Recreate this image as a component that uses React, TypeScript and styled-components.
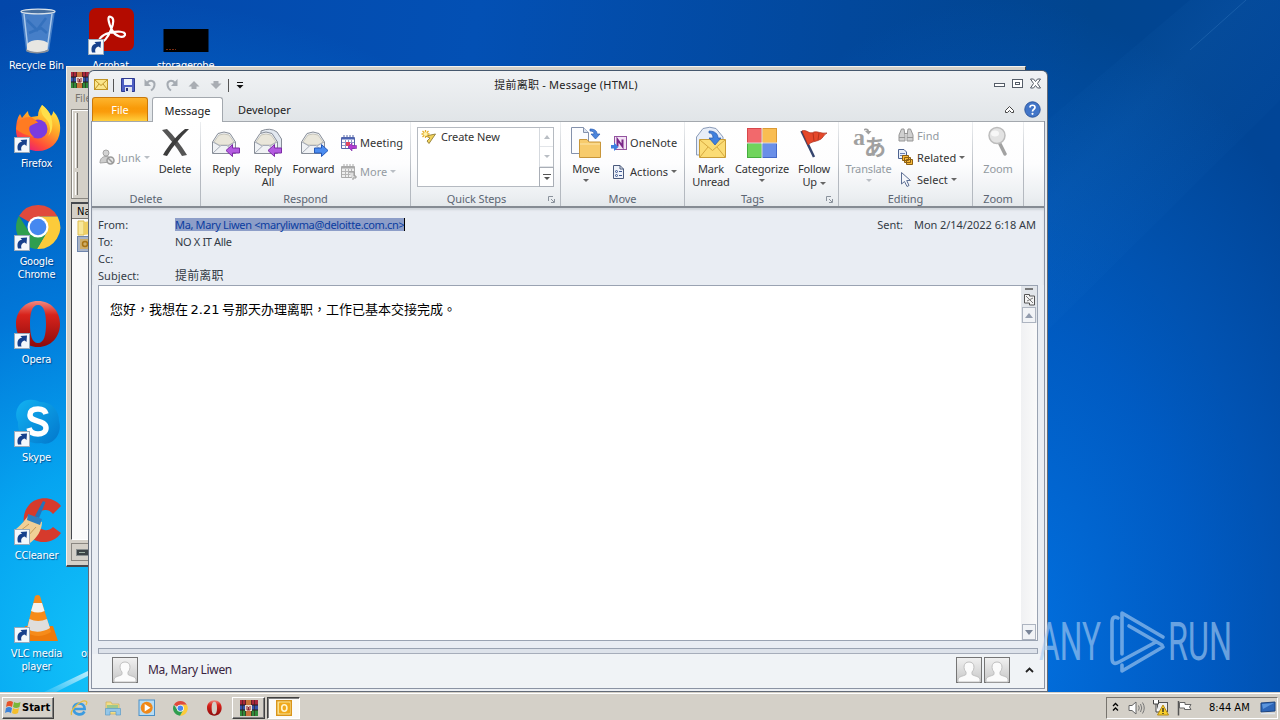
import React from "react";
import styled, { createGlobalStyle, css } from "styled-components";

const UI = `"Noto Sans", "Open Sans", "Noto Sans CJK SC", sans-serif`;
const TAHOMA = `"DejaVu Sans Condensed", "DejaVu Sans", sans-serif`;

const GlobalStyle = createGlobalStyle`
  * {
    box-sizing: border-box;
  }
  body {
    margin: 0;
    overflow: hidden;
    font-family: ${UI};
    font-size: 11px;
    color: #333;
  }
  svg {
    display: block;
    flex: none;
    overflow: visible;
  }
`;

const Desktop = styled.div`
  position: relative;
  display: flex;
  flex-direction: column;
  justify-content: space-between;
  width: 1280px;
  height: 720px;
  overflow: hidden;
  background: radial-gradient(
      ellipse 620px 660px at 130px 660px,
      #14c8fb 0%,
      rgba(6, 172, 246, 0.92) 30%,
      rgba(0, 140, 236, 0.7) 55%,
      rgba(0, 120, 224, 0) 100%
    ),
    radial-gradient(
      ellipse 400px 640px at 1000px 640px,
      #0272e2 0%,
      rgba(0, 98, 210, 0.75) 50%,
      rgba(0, 80, 180, 0) 100%
    ),
    linear-gradient(97deg, #0347aa 0%, #0350b4 35%, #02489c 62%, #01458f 80%, #01459a 100%);
`;

const Rays = styled.svg`
  position: absolute;
  top: 0;
  left: 0;
`;

const IconGrid = styled.div`
  display: grid;
  grid-template-columns: 73px 75px 75px;
  grid-auto-flow: column;
  grid-template-rows: repeat(7, 98px);
  padding-top: 6px;
  height: 692px;
`;

const DesktopItem = styled.div<{ $left?: boolean }>`
  display: flex;
  flex-direction: column;
  align-items: ${(p) => (p.$left ? "flex-start" : "center")};
  padding-left: ${(p) => (p.$left ? "8px" : "0")};
`;

const IconBox = styled.div`
  position: relative;
  width: 48px;
  height: 48px;
`;

const Shortcut = styled.svg`
  position: absolute;
  left: 1px;
  bottom: -1px;
`;

const Caption = styled.span`
  margin-top: 5px;
  font-family: ${TAHOMA};
  font-size: 11px;
  line-height: 13px;
  letter-spacing: -0.2px;
  text-align: center;
  white-space: pre;
  color: #fff;
  text-shadow: 1px 1px 1px rgba(0, 30, 90, 0.6);
`;

/* archiver window in the back */

const BackWindow = styled.div`
  position: absolute;
  left: 66px;
  top: 66px;
  width: 960px;
  height: 501px;
  display: flex;
  flex-direction: column;
  padding: 5px 4px 4px 4px;
  background: #d4d0c8;
  border: 1px solid #f4f2ee;
  border-right-color: #404040;
  border-bottom: 2px solid #45474c;
  font-family: ${TAHOMA};
`;

const BackMenu = styled.div`
  height: 21px;
  padding: 4px 0 0 4px;
  color: #77746e;
  line-height: 14px;
`;

const BackToolbar = styled.div`
  display: flex;
  flex-direction: column;
  gap: 4px;
  height: 90px;
  padding: 3px;
  border: 1px solid #8a8781;
  box-shadow: inset 1px 1px #fff;
`;

const Grip = styled.div<{ $h: number }>`
  width: 3px;
  height: ${(p) => p.$h}px;
  border-left: 1px solid #fff;
  border-right: 1px solid #77746e;
`;

const BackList = styled.div`
  flex: 1;
  margin-top: 3px;
  border: 2px solid #45474c;
  border-left-width: 1px;
  border-right: 0;
  border-bottom: 1px solid #fff;
  background: #fafafa;
`;

const BackColumn = styled.div`
  height: 15px;
  padding-left: 5px;
  border-bottom: 1px solid #77746e;
  background: #d4d0c8;
  color: #000;
  line-height: 15px;
`;

const BackRows = styled.div`
  padding: 1px 0 0 5px;
`;

const BackStatus = styled.div`
  height: 18px;
  margin-top: 3px;
  padding: 5px 0 0 4px;
  border: 1px solid #8a8781;
`;

/* message window */

const MailWindow = styled.div`
  position: absolute;
  left: 88px;
  top: 70px;
  width: 960px;
  height: 622px;
  display: flex;
  flex-direction: column;
  padding: 0 2px 2px;
  border: 1px solid #636b78;
  border-top-color: #46586e;
  border-radius: 6px 6px 0 0;
  background: linear-gradient(#f0f2f4 0, #e1e5e8 50px, #e9edf2 140px, #eceff4 100%);
`;

const TitleBar = styled.div`
  display: grid;
  grid-template-columns: 200px 1fr 204px;
  height: 26px;
  align-items: center;
`;

const QuickAccess = styled.div`
  display: flex;
  align-items: center;
  gap: 8px;
  padding: 2px 0 0 3px;
`;

const Divider = styled.i`
  width: 1px;
  height: 13px;
  margin: 0 -1px 0 -3px;
  background: #555;
`;

const Title = styled.div`
  padding-bottom: 1px;
  text-align: center;
  font-size: 11px;
  letter-spacing: 0.24px;
  color: #222;
`;

const WindowButtons = styled.div`
  display: flex;
  justify-content: flex-end;
  gap: 7px;
  padding: 0 4px 2px 0;
`;

const TabBar = styled.div`
  display: flex;
  align-items: flex-end;
  height: 24px;
  padding-left: 1px;
`;

const Tab = styled.div<{ $kind?: "file" | "active" }>`
  display: flex;
  align-items: center;
  justify-content: center;
  height: 24px;
  letter-spacing: 0;
  color: #222;
  ${(p) =>
    p.$kind === "file" &&
    css`
      width: 56px;
      margin-right: 4px;
      color: #fff;
      border: 1px solid #c9790c;
      border-bottom: 0;
      border-radius: 3px 3px 0 0;
      background: linear-gradient(#fdb52e, #f99a08 45%, #fa9c0c 60%, #ffce3c);
    `}
  ${(p) =>
    p.$kind === "active" &&
    css`
      width: 71px;
      height: 25px;
      margin: 0 15px -1px 0;
      border: 1px solid #a3a8ae;
      border-bottom: 0;
      border-radius: 3px 3px 0 0;
      background: #fff;
      z-index: 1;
    `}
`;

const TabTools = styled.div`
  display: flex;
  align-items: center;
  gap: 9px;
  height: 24px;
  margin-left: auto;
  padding-right: 4px;
`;

const Frame = styled.div`
  flex: 1;
  display: flex;
  flex-direction: column;
  min-height: 0;
  border: 1px solid #8b93a3;
  border-top: 0;
  background: #e9edf3;
`;

const Ribbon = styled.div`
  display: flex;
  height: 87px;
  border-top: 1px solid #a3a8ae;
  border-bottom: 2px solid #858b93;
  background: linear-gradient(#fff 0, #fdfdfe 50%, #eceff2 88%, #e4e8eb 100%);
`;

const Group = styled.div<{ $w: number }>`
  display: flex;
  flex-direction: column;
  flex: none;
  width: ${(p) => p.$w}px;
  border-right: 1px solid;
  border-image: linear-gradient(#eef0f2, #b4b9c0 60%, #b4b9c0) 1;
`;

const GroupBody = styled.div<{ $pad: number }>`
  display: flex;
  height: 69px;
  padding: 5px 0 0 ${(p) => p.$pad}px;
`;

const GroupLabel = styled.div<{ $launcher?: boolean }>`
  display: flex;
  justify-content: center;
  position: relative;
  padding-right: ${(p) => (p.$launcher ? 18 : 0)}px;
  line-height: 15px;
  letter-spacing: -0.1px;
  color: #5c6573;
`;

const Launcher = styled.svg`
  position: absolute;
  right: 5px;
  top: 5px;
`;

const BigButton = styled.div<{ $w: number; $off?: boolean }>`
  display: flex;
  flex-direction: column;
  align-items: center;
  flex: none;
  width: ${(p) => p.$w}px;
  color: ${(p) => (p.$off ? "#939aa1" : "#333")};
`;

const BigLabel = styled.span`
  margin-top: 3px;
  line-height: 13px;
  letter-spacing: -0.15px;
  text-align: center;
  white-space: pre;
`;

const SmallColumn = styled.div<{ $w?: number; $row: number; $top: number; $left?: number }>`
  display: flex;
  flex-direction: column;
  width: ${(p) => (p.$w ? p.$w + "px" : "auto")};
  margin: ${(p) => p.$top}px 0 0 ${(p) => p.$left ?? 0}px;
  > div {
    flex: none;
    height: ${(p) => p.$row}px;
  }
`;

const SmallButton = styled.div<{ $off?: boolean }>`
  display: flex;
  align-items: center;
  gap: 3px;
  letter-spacing: 0.05px;
  white-space: nowrap;
  color: ${(p) => (p.$off ? "#939aa1" : "#333")};
`;

const Arrow = styled.i<{ $off?: boolean; $gap?: number }>`
  width: 0;
  height: 0;
  margin-top: ${(p) => p.$gap ?? 0}px;
  border: 3px solid transparent;
  border-top-color: ${(p) => (p.$off ? "#b9bec4" : "#666")};
  border-bottom: 0;
  display: inline-block;
  vertical-align: middle;
`;

const Gallery = styled.div`
  display: flex;
  width: 137px;
  height: 60px;
  border: 1px solid #b5bac1;
  background: #fff;
`;

const GalleryItem = styled.div`
  display: flex;
  gap: 4px;
  flex: 1;
  padding: 1px 0 0 3px;
  line-height: 16px;
  letter-spacing: -0.1px;
`;

const GalleryScroll = styled.div`
  display: grid;
  grid-template-rows: 19px 20px 19px;
  width: 14px;
  border-left: 1px solid #d5d9de;
`;

const ScrollCell = styled.div<{ $on?: boolean }>`
  display: flex;
  align-items: center;
  justify-content: center;
  border-bottom: 1px solid #e2e5e9;
  ${(p) =>
    p.$on &&
    css`
      margin: 0 -1px -1px -1px;
      border: 1px solid #a9aeb6;
    `}
`;

const Fields = styled.div`
  display: grid;
  grid-template-columns: 77px 1fr auto;
  grid-auto-rows: 17px;
  height: 77px;
  padding: 8px 8px 0 6px;
  line-height: 17px;
  color: #333b45;
  box-shadow: inset 0 2px 2px #cfd4da;
  white-space: pre;
`;

const Cell = styled.div<{ $ls?: number; $size?: number }>`
  font-size: ${(p) => p.$size ?? 11}px;
  letter-spacing: ${(p) => p.$ls ?? 0.05}px;
`;

const SentLabel = styled.span`
  margin-right: 11px;
`;

const Selected = styled.span`
  display: inline-block;
  height: 13px;
  line-height: 13px;
  border-right: 1px solid #000;
  background: #8d9ec8;
  color: #0a3ca0;
`;

const MessageBody = styled.div`
  display: flex;
  height: 356px;
  margin: 0 6px;
  border: 1px solid #9aa3b2;
  background: #fff;
`;

const Message = styled.div`
  flex: 1;
  padding: 15px 0 0 11px;
  font-family: "DejaVu Sans", "Noto Sans CJK TC", sans-serif;
  font-size: 13px;
  line-height: 18px;
  word-spacing: -1.6px;
  color: #000;
`;

const Scrollbar = styled.div`
  display: flex;
  flex-direction: column;
  justify-content: space-between;
  width: 16px;
  background: linear-gradient(90deg, #f0f1f3, #fafafa);
`;

const ScrollTop = styled.div`
  display: flex;
  flex-direction: column;
  align-items: center;
  background: #e1e5ea;
`;

const ScrollButton = styled.div`
  display: flex;
  align-items: center;
  justify-content: center;
  width: 14px;
  height: 16px;
  margin: 0 1px;
  border: 1px solid #adb4c0;
  background: #f1f3f6;
`;

const Splitter = styled.div`
  height: 6px;
  margin: 7px 6px 0;
  border: 1px solid #9aa3b2;
  border-bottom-color: #a6adba;
  background: #dde2ea;
`;

const People = styled.div`
  flex: 1;
  display: flex;
  align-items: center;
  gap: 2px;
  padding: 0 10px 3px 20px;
  background: #f0f3f6;
`;

const PersonName = styled.span`
  flex: 1;
  padding-left: 8px;
  font-size: 12px;
  letter-spacing: -0.35px;
  color: #3a2340;
`;

const Watermark = styled.svg`
  position: absolute;
  left: 1034px;
  top: 606px;
`;

/* taskbar */

const Taskbar = styled.div`
  display: flex;
  align-items: center;
  height: 28px;
  padding: 2px 2px 0 2px;
  border-top: 1px solid #d4d0c8;
  box-shadow: inset 0 1px #fff;
  background: #d4d0c8;
  font-family: ${TAHOMA};
  color: #000;
`;

const raised = css`
  border: 1px solid;
  border-color: #fff #404040 #404040 #fff;
  box-shadow: inset -1px -1px #808080;
`;

const StartButton = styled.div`
  display: flex;
  align-items: center;
  gap: 1px;
  width: 52px;
  height: 22px;
  padding: 0 2px 1px;
  margin-right: 16px;
  font-weight: bold;
  font-size: 11px;
  ${raised}
`;

const Launch = styled.div`
  display: flex;
  width: 34px;
`;

const TaskButtons = styled.div`
  display: flex;
  gap: 2px;
  margin-left: -8px;
`;

const TaskButton = styled.div<{ $active?: boolean }>`
  display: flex;
  align-items: center;
  justify-content: center;
  width: 33px;
  height: 22px;
  ${(p) =>
    p.$active
      ? css`
          border: 1px solid;
          border-color: #404040 #fff #fff #404040;
          box-shadow: inset 1px 1px #808080;
          background: #fbfaf8;
        `
      : raised}
`;

const Tray = styled.div`
  display: flex;
  align-items: center;
  gap: 7px;
  width: 172px;
  height: 22px;
  margin-left: auto;
  padding: 0 1px 0 5px;
  border: 1px solid;
  border-color: #77746e #fff #fff #77746e;
  > svg:first-child {
    margin-right: 2px;
  }
`;

const Clock = styled.span`
  flex: 1;
  padding-left: 9px;
  white-space: nowrap;
`;

/* icons */

const ShortcutArrow = () => (
  <Shortcut width="16" height="16" viewBox="0 0 16 16">
    <rect x=".5" y=".5" width="15" height="15" fill="#f4f8fc" stroke="#9ab" />
    <path d="M4 13.500C2.500 8.500 4.500 5 8 4.800L6.500 3L13 2.500L12.500 9L10.700 7.500C8 8 6.500 10 7.500 13.500Z" fill="#16408c" />
  </Shortcut>
);

const RecycleIcon = () => (
  <svg width="48" height="48" viewBox="0 0 48 48">
    <path d="M8 5L13 45C18 48 31 48 36 45L42 5Z" fill="#7da9dd" fillOpacity=".55" />
    <path d="M11 8L15 44M39 8L34 44" stroke="#d5e8fa" strokeWidth="1.500" opacity=".7" />
    <path d="M14 38C18 33 30 33 35 37L34 44C29 47 19 47 14 44Z" fill="#e7e6e2" />
    <path d="M13 43C18 47 30 47 36 43L35 45.500C29 48 19 48 13.500 45.500Z" fill="#8b8f96" />
    <path d="M14 14L24 24L33 12M16 27L28 22L34 27" stroke="#2766b4" strokeWidth="2.500" fill="none" opacity=".55" />
    <ellipse cx="25" cy="5.500" rx="17" ry="2.300" fill="#476f9f" stroke="#d9e2ea" strokeWidth="1.300" />
  </svg>
);

const AcrobatIcon = () => (
  <svg width="48" height="48" viewBox="0 0 48 48">
    <rect x="2" y="2" width="45" height="43" rx="7" fill="#b30b00" />
    <path
      d="M24 11C20 9 21 16 25 24C28 30 36 33 38 29C39 25 30 25 22 27C14 29 11 34 13 36C16 38 21 31 24 24C27 17 27 12 24 11Z"
      fill="none"
      stroke="#fff"
      strokeWidth="2.200"
    />
  </svg>
);

const StorageIcon = () => (
  <svg width="48" height="48" viewBox="0 0 48 48">
    <rect x="1.500" y="23" width="45" height="23" fill="#000" />
    <path d="M4 43.500H14" stroke="#7a2c10" strokeDasharray="2 1" />
  </svg>
);

const FirefoxIcon = () => (
  <svg width="48" height="48" viewBox="0 0 48 48">
    <defs>
      <linearGradient id="ff" x1=".8" y1="0" x2=".2" y2="1">
        <stop offset="0" stopColor="#fff04a" />
        <stop offset=".4" stopColor="#ffa526" />
        <stop offset=".75" stopColor="#ff4b3a" />
        <stop offset="1" stopColor="#e31587" />
      </linearGradient>
    </defs>
    <path
      d="M29 1C34 5 37 9 38 12C40 10 40 8 40 7C45 12 48 19 47 27C46 39 37 47 25 47C12 47 3 38 3 26C3 20 4 14 7 10L9 14C11 11 13 9 15 7C15 10 16 12 18 13L25 12C25 7 27 4 29 1Z"
      fill="url(#ff)"
    />
    <circle cx="25" cy="25" r="9.500" fill="#7a3be0" />
    <path d="M3 25C5 16 10 13 18 13C21 15 24 17 25 19C21 19 20 21 17 22C15 25 17 30 21 33C12 31 6 28 3 25Z" fill="#ff7b22" />
    <path d="M29 1C27 7 29 11 33 15C38 20 38 28 35 32C41 27 40 16 37 11C35 6 32 3 29 1Z" fill="#ffe04a" />
  </svg>
);

const ChromeIcon = ({ size = 48 }: { size?: number }) => (
  <svg width={size} height={size} viewBox="0 0 48 48">
    <path d="M25 25L6 14A22 22 0 0 1 44.500 14.500H25Z" fill="#e04a3c" />
    <path d="M25 25V14.500H44.500A22 22 0 0 1 24 47L34 30Z" fill="#fccb3a" />
    <path d="M25 25L34 30L24 47A22 22 0 0 1 6 14L16 30Z" fill="#2f9e4f" />
    <circle cx="25" cy="25" r="10.500" fill="#fff" />
    <circle cx="25" cy="25" r="8.300" fill="#4688f0" />
  </svg>
);

const OperaIcon = ({ size = 48 }: { size?: number }) => (
  <svg width={size} height={size} viewBox="0 0 48 48">
    <defs>
      <linearGradient id="op" x1="0" y1="0" x2="0" y2="1">
        <stop offset="0" stopColor="#f08a80" />
        <stop offset=".3" stopColor="#d8231c" />
        <stop offset="1" stopColor="#8c0b0c" />
      </linearGradient>
    </defs>
    <path
      fillRule="evenodd"
      d="M25 1C38 1 47 11 47 24S38 47 25 47S3 37 3 24S12 1 25 1ZM25 5C19 5 17 13 17 24S19 43 25 43S33 35 33 24S31 5 25 5Z"
      fill="url(#op)"
    />
  </svg>
);

const SkypeIcon = () => (
  <svg width="48" height="48" viewBox="0 0 48 48">
    <defs>
      <linearGradient id="sk" x1="0" y1="0" x2="1" y2="1">
        <stop offset="0" stopColor="#12b2f2" />
        <stop offset="1" stopColor="#0277cc" />
      </linearGradient>
    </defs>
    <path d="M15 2C21 1 25 3 27 4C39 4 46 12 46 23C50 36 39 49 28 45C14 47 4 37 5 24C0 14 6 3 15 2Z" fill="url(#sk)" />
    <path
      d="M33 16C32 12 29 11 25 11C20 11 17 13 17 17C17 25 33 21 33 30C33 34 29 36 25 36C20 36 17 34 16 30"
      fill="none"
      stroke="#fff"
      strokeWidth="5.500"
    />
  </svg>
);

const CCleanerIcon = () => (
  <svg width="48" height="48" viewBox="0 0 48 48">
    <path d="M48 10C40 0 24 0 16 9C7 19 10 37 20 43C29 49 42 46 48 37L40 31C35 36 28 35 25 29C21 22 26 13 33 14C37 14 39 17 40 18Z" fill="#d63a2c" />
    <path d="M3 33C9 28 12 24 15 20L29 26C29 34 24 42 17 47L12 40Z" fill="#f0cf96" />
    <path d="M7 35L16 28M14 41L23 31" stroke="#c89b58" />
    <path d="M15 18L29 23L27 29L14 24Z" fill="#2e7fc0" />
    <path d="M22 20L30 5L32.500 6L26 22Z" fill="#2373bb" />
  </svg>
);

const VlcIcon = () => (
  <svg width="48" height="48" viewBox="0 0 48 48">
    <path d="M12 32H40L45 47H12Z" fill="#ed7a0c" />
    <path d="M22 2Q25 0 27 2L38 38Q25 46 13 38Z" fill="#f68b1a" />
    <path d="M20.500 9H29L31.500 17Q25 20 18 17Z" fill="#f4f2ef" />
    <path d="M16.500 25Q25 29 34 25L37 34Q25 41 14 35Z" fill="#dfdedc" />
  </svg>
);

const WinRarIcon = () => (
  <svg width="18" height="16" viewBox="0 0 18 16">
    <path d="M0 0H18V5H0Z" fill="#a8273c" />
    <path d="M0 5H18V10H0Z" fill="#3351a8" />
    <path d="M0 10H18V16H0Z" fill="#2f8a3a" />
    <path d="M0 5H18M0 10H18" stroke="#23181c" />
    <path d="M6 0H11V16H6Z" fill="#c9743a" />
    <path d="M5.500 0V16M11.500 0V16M2.500 0V16M14.500 0V16" stroke="#35201c" opacity=".6" />
    <path d="M5 5H12V11H5Z" fill="#e8dbd0" />
    <path d="M7 6V10H10V6M8.500 7V10" stroke="#8a2233" fill="none" />
  </svg>
);

const OutlookIcon = () => (
  <svg width="16" height="16" viewBox="0 0 16 16">
    <rect x=".7" y=".7" width="14.600" height="14.600" fill="#fbe08a" stroke="#d9941a" strokeWidth="1.400" />
    <rect x="3" y="2.500" width="11" height="11" rx="1" fill="#f0a91c" />
    <ellipse cx="8.300" cy="8" rx="2.600" ry="3.200" fill="none" stroke="#fff4cf" strokeWidth="1.600" />
  </svg>
);

const MessageFileIcon = () => (
  <svg width="16" height="16" viewBox="0 0 16 16">
    <rect x=".5" y=".5" width="15" height="15" fill="#a9b4c6" stroke="#6f86ad" />
    <rect x="3" y="3" width="10" height="10" fill="#cfae6a" />
    <circle cx="8" cy="8" r="2.500" fill="none" stroke="#a97412" strokeWidth="1.500" />
  </svg>
);

const FolderIcon = () => (
  <svg width="16" height="16" viewBox="0 0 16 16">
    <path d="M1 1H7V15H1Z" fill="#f8e79a" stroke="#dcbc4f" />
    <path d="M7 2L14 1V14L7 15Z" fill="#efcf63" />
  </svg>
);

const MailIcon = () => (
  <svg width="14" height="14" viewBox="0 0 14 14">
    <rect x=".5" y="1.500" width="13" height="10" fill="#fae58a" stroke="#c09426" />
    <path d="M1 2L7 7.500L13 2M1 11L5 6M13 11L9 6" stroke="#c09426" fill="none" />
  </svg>
);

const SaveIcon = () => (
  <svg width="14" height="14" viewBox="0 0 14 14">
    <path d="M.5.5H13.500V13.500H.5Z" fill="#4e5fc4" stroke="#2d3a91" />
    <rect x="3" y="1" width="8" height="6" fill="#eef2fa" />
    <rect x="4" y="9" width="7" height="5" fill="#dfe3ef" />
    <rect x="5" y="10" width="2" height="3" fill="#26307c" />
  </svg>
);

const UndoIcon = ({ flip }: { flip?: boolean }) => (
  <svg width="14" height="14" viewBox="0 0 14 14">
    <g transform={flip ? "matrix(-1 0 0 1 14 0)" : undefined}>
      <path d="M4 5C7 1.500 12 2.500 11.500 7C11.300 9.500 9.500 11.500 8 12.500" fill="none" stroke="#a5abb2" strokeWidth="2" />
      <path d="M1.500 1V8H8Z" fill="#a5abb2" />
    </g>
  </svg>
);

const UpIcon = ({ flip }: { flip?: boolean }) => (
  <svg width="14" height="12" viewBox="0 0 14 12">
    <path transform={flip ? "matrix(1 0 0 -1 0 12)" : undefined} d="M7 2L12.500 7.500H9.500V10H4.500V7.500H1.500Z" fill="#a9adb3" />
  </svg>
);

const CustomizeIcon = () => (
  <svg width="8" height="12" viewBox="0 0 8 12">
    <path d="M1 3.500H7" stroke="#111" />
    <path d="M.5 6H7.500L4 9.500Z" fill="#111" />
  </svg>
);

const DeleteIcon = () => (
  <svg width="32" height="32" viewBox="0 0 32 32">
    <path d="M3 3L8 2C15 9 22 18 28 28L23 29C17 19 10 11 3 3Z" fill="#555" />
    <path d="M30 2L26 2C17 9 9 19 4 28L8 29C14 19 21 11 30 2Z" fill="#3d3d3d" />
  </svg>
);

const JunkIcon = () => (
  <svg width="16" height="16" viewBox="0 0 16 16">
    <circle cx="7" cy="4" r="3" fill="#d3d3d3" stroke="#a4a4a4" />
    <path d="M1 14C1 9 4 7.500 7 7.500S12 9 12 13Z" fill="#cdcdcd" stroke="#a4a4a4" />
    <circle cx="11.500" cy="11.500" r="3.500" fill="#e4e4e4" stroke="#9a9a9a" strokeWidth="1.500" />
    <path d="M9 9L14 14" stroke="#9a9a9a" strokeWidth="1.500" />
  </svg>
);

const Envelope = () => (
  <>
    <path d="M2.500 14L8 5.500Q14 2.500 20 5.500L25.500 14V25.500H2.500Z" fill="#f0f2f5" stroke="#878d97" />
    <path d="M4 14L9 7Q14 5 19 7L24 14L19 17H9Z" fill="#e9e6da" stroke="#b8b6ab" strokeWidth=".7" />
    <path d="M3 25L11 17.500H17L25 25M3 14L10 18M25 14L18 18" stroke="#a6acb8" fill="none" />
  </>
);

const ReplyIcon = ({ all }: { all?: boolean }) => (
  <svg width="32" height="32" viewBox="0 0 32 32">
    {all && <path d="M9 4Q18 0 25 5L29.500 12V24H9Z" fill="#e2e8f0" stroke="#878d97" />}
    <g transform="translate(0 1)">
      <Envelope />
    </g>
    <path d="M16 23.500L22.500 17.500V21H29.500V26H22.500V29.500Z" fill="#b35be0" stroke="#7d2ba8" />
  </svg>
);

const ForwardIcon = () => (
  <svg width="32" height="32" viewBox="0 0 32 32">
    <g transform="translate(1 1)">
      <Envelope />
    </g>
    <path d="M30 23.500L23.500 17.500V21H16.500V26H23.500V29.500Z" fill="#4b8cf0" stroke="#2659b8" />
  </svg>
);

const MeetingIcon = ({ off }: { off?: boolean }) => (
  <svg width="16" height="16" viewBox="0 0 16 16">
    <path d="M.5 2.500H13.500V13.500H.5Z" fill={off ? "#eee" : "#fff"} stroke={off ? "#a9a9a9" : "#5566a8"} />
    <path d="M1 3.500H13" stroke={off ? "#aaa" : "#4b63b4"} strokeWidth="2" />
    <path d="M4.500 5V13M7.500 5V13M10.500 5V13M1 7.500H13M1 10.500H13" stroke={off ? "#b5b5b5" : "#8f9cc9"} />
    <path d="M3 0V3M6 0V3M9 0V3M12 0V3" stroke={off ? "#aaa" : "#5566a8"} />
    {off ? (
      <path d="M8 8H13V12H15V14H12V16" fill="#ddd" stroke="#999" />
    ) : (
      <>
        <rect x="5" y="7" width="4" height="4" fill="#e0475f" />
        <path d="M7 12L11 8V10.500H15.500V13.500H11V16Z" fill="#b13bd0" stroke="#7d2ba8" strokeWidth=".6" />
      </>
    )}
  </svg>
);

const CreateIcon = () => (
  <svg width="16" height="16" viewBox="0 0 16 16">
    <path d="M5 7L14.500 5L8 14.500L6 12L9 9Z" fill="#f3d35a" stroke="#9a8742" />
    <path d="M4.500 1V9M.5 5H8.500M1.500 2L7.500 8M7.500 2L1.500 8" stroke="#e5ad2a" strokeWidth="1.300" />
    <circle cx="4.500" cy="5" r="2" fill="#fff2a8" />
  </svg>
);

const MoveIcon = () => (
  <svg width="32" height="32" viewBox="0 0 32 32">
    <path d="M1.500.5H13.500L18.500 5.500V26.500H1.500Z" fill="#fcfdff" stroke="#8492ac" />
    <path d="M13.500.5V5.500H18.500" fill="#dbe3f0" stroke="#8492ac" />
    <path d="M9.500 12.500H17L19 15H30.500V30.500H9.500Z" fill="#f7cb6c" stroke="#c8963b" />
    <path d="M10 17H30" stroke="#fde6ab" />
    <path d="M20 2C25 2 27 4 27 7H30L25.500 12L21 7H24C24 5 23 4 20 4Z" fill="#4d86dc" stroke="#2c5fb3" strokeWidth=".7" />
  </svg>
);

const OneNoteIcon = () => (
  <svg width="16" height="16" viewBox="0 0 16 16">
    <rect x="3.500" y="1.500" width="12" height="13" fill="#f3e2f5" stroke="#93549f" />
    <path d="M6.500 11.500V4.500L11.500 11.500V4.500" fill="none" stroke="#7a2788" strokeWidth="2" />
    <path d="M0 10H3V7.500L7.500 12L3 16V13.500H0Z" fill="#3f7fe0" />
  </svg>
);

const ActionsIcon = () => (
  <svg width="16" height="16" viewBox="0 0 16 16">
    <path d="M2.500 1.500H9L12.500 5V14.500H2.500Z" fill="#eef2f9" stroke="#4a5a7c" />
    <path d="M9 1.500V5H12.500" fill="none" stroke="#4a5a7c" />
    <circle cx="5.500" cy="7.500" r="1" fill="none" stroke="#3a5490" />
    <circle cx="5.500" cy="11.500" r="1" fill="none" stroke="#3a5490" />
    <path d="M8 7.500H11M8 11.500H11" stroke="#3a5490" />
  </svg>
);

const UnreadIcon = () => (
  <svg width="32" height="32" viewBox="0 0 32 32">
    <path d="M1.500 12V10L8 1.500Q15 -1 21 1.500L28 10V28H1.500Z" fill="#e8eef8" stroke="#8a9bb8" />
    <path d="M4.500 12.500H30.500V30.500H4.500Z" fill="#fbdc75" stroke="#c99d38" />
    <path d="M5 13L17.500 23.500L30 13M5 30L13 20M30 30L22 20" fill="none" stroke="#d5a83f" />
    <path d="M14 4C20 4 23 7 23 11H26L20 18L14 11H18C18 8 17 6 14 6Z" fill="#3f80de" stroke="#2456ac" strokeWidth=".7" />
  </svg>
);

const CategorizeIcon = () => (
  <svg width="32" height="32" viewBox="0 0 32 32">
    <rect x="1.500" y="1.500" width="14" height="14" fill="#f2696c" stroke="#d8474a" />
    <rect x="16.500" y="1.500" width="14" height="14" fill="#f9bd52" stroke="#dc9a34" />
    <rect x="1.500" y="16.500" width="14" height="14" fill="#6fd45c" stroke="#45ad3f" />
    <rect x="16.500" y="16.500" width="14" height="14" fill="#6a8fe8" stroke="#4569c9" />
    <path d="M16 1V31M1 16H31" stroke="#f6f8fa" />
  </svg>
);

const FlagIcon = () => (
  <svg width="32" height="32" viewBox="0 0 32 32">
    <path d="M3.500 4L16 30" stroke="#35456e" strokeWidth="2.500" />
    <path d="M4 4C9 2 11 8 16 5C20 4 23 7 29 6C25 8 25 12 21 13C17 15 14 14 10 18Z" fill="#e5482a" stroke="#a92b18" strokeWidth=".7" />
    <path d="M15 6L16 14M21 6L20 13" stroke="#b5321c" />
  </svg>
);

const TranslateIcon = () => (
  <svg width="32" height="32" viewBox="0 0 32 32" fill="#a0a0a0">
    <text x="0" y="18" fontFamily="Liberation Serif, serif" fontWeight="bold" fontSize="24">
      a
    </text>
    <text x="11" y="28" fontFamily="Noto Sans CJK JP, sans-serif" fontWeight="bold" fontSize="22">
      あ
    </text>
    <path d="M11 2C14 1 16 2 16 4H18.500L15.500 7.500L12 4H14C14 3 13 3 11 3.500Z" />
  </svg>
);

const FindIcon = () => (
  <svg width="16" height="16" viewBox="0 0 16 16">
    <path d="M3.500 2H6L7 8V14H1V8ZM10 2H12.500L15 8V14H9V8Z" fill="#d0d0d0" stroke="#969696" />
    <path d="M6 6.500H10M1 10.500H7M9 10.500H15" stroke="#969696" />
  </svg>
);

const RelatedIcon = () => (
  <svg width="16" height="16" viewBox="0 0 16 16">
    <path d="M.5.5H6L8.500 3V9.500H.5Z" fill="#e9eff9" stroke="#4e6390" />
    <path d="M2 4.500H7M2 6.500H7" stroke="#6b82b5" />
    <path d="M4.500 6.500H10.500V11.500H4.500ZM6.500 8.500H12.500V13.500H6.500ZM8.500 10.500H14.500V15.500H8.500Z" fill="#f7b93a" stroke="#8c5f13" />
  </svg>
);

const SelectIcon = () => (
  <svg width="16" height="16" viewBox="0 0 16 16">
    <path d="M3.500 1.500V13L6.500 10.500L9 15.500L11 14.500L8.700 9.500H12.500Z" fill="#f4f6fa" stroke="#5d6f94" />
  </svg>
);

const ZoomIcon = () => (
  <svg width="32" height="32" viewBox="0 0 32 32">
    <path d="M18 17L23 27" stroke="#a2a2a2" strokeWidth="3.500" strokeLinecap="round" />
    <circle cx="15" cy="8.500" r="8" fill="#e3e3e3" stroke="#bcbcbc" strokeWidth="1.500" />
    <ellipse cx="13" cy="6.500" rx="4" ry="3" fill="#f7f7f7" />
  </svg>
);

const LauncherIcon = () => (
  <Launcher width="7" height="7" viewBox="0 0 7 7">
    <path d="M.5 5V.5H5M3 3L6 6M6.500 3V6.500H3" fill="none" stroke="#8a929c" />
  </Launcher>
);

const HelpIcon = () => (
  <svg width="17" height="17" viewBox="0 0 17 17">
    <circle cx="8.500" cy="8.500" r="7.700" fill="#4175c8" stroke="#2c579f" />
    <path d="M6 6.500C6 3.500 11 3.500 11 6.500C11 8.300 8.500 8.300 8.500 10.500" fill="none" stroke="#fff" strokeWidth="1.700" />
    <circle cx="8.500" cy="12.800" r="1.100" fill="#fff" />
  </svg>
);

const Avatar = () => (
  <svg width="26" height="26" viewBox="0 0 26 26">
    <defs>
      <linearGradient id="av" x1="0" y1="0" x2="0" y2="1">
        <stop offset="0" stopColor="#f1f1f1" />
        <stop offset="1" stopColor="#c6c6c6" />
      </linearGradient>
    </defs>
    <rect x=".5" y=".5" width="25" height="25" fill="url(#av)" stroke="#757575" />
    <path
      d="M2 25V22C3 19 7 19.500 10 17.500V15C7 12 7 5 13 5S19 12 16 15V17.500C19 19.500 23 19 24 22V25Z"
      fill="#fbfbfb"
      stroke="#c0c0c0"
    />
  </svg>
);

const IeIcon = () => (
  <svg width="18" height="18" viewBox="0 0 18 18">
    <path d="M14.500 12.500C11.500 17.500 3.500 15.500 3.500 9.500C3.500 3 14.500 2.500 14.700 10H4" fill="none" stroke="#3b9be0" strokeWidth="2.600" />
    <path d="M1.500 16C-.5 11 12-.5 16.500 2.500C17.500 3.500 16.500 5 16 6" fill="none" stroke="#e6bd3f" strokeWidth="1.300" />
  </svg>
);

const ExplorerIcon = () => (
  <svg width="18" height="18" viewBox="0 0 18 18">
    <path d="M2 3H7L8 5H15V15H2Z" fill="#f3dd86" stroke="#cdb05a" strokeWidth=".7" />
    <path d="M3 6H14V10H3Z" fill="#9cc88e" />
    <path d="M1.500 9.500H16.500V16H12V12.500H6V16H1.500Z" fill="#93c6e8" stroke="#5b9cc9" strokeWidth=".7" />
  </svg>
);

const PlayerIcon = () => (
  <svg width="18" height="18" viewBox="0 0 18 18">
    <rect x="1" y="1" width="15.500" height="15.500" fill="#b7dcf4" stroke="#4a90c8" />
    <circle cx="8.700" cy="8.700" r="6" fill="#f08818" />
    <path d="M6.700 5V12.500L12.500 8.700Z" fill="#fff" />
  </svg>
);

const StartLogo = () => (
  <svg width="16" height="16" viewBox="0 0 16 16">
    <path d="M2 3Q5 1 8 3L7 8Q4 6 1 8Z" fill="#e6532a" />
    <path d="M9 3Q12 5 15.500 3L14.500 8Q11 10 8 8Z" fill="#7ab73a" />
    <path d="M1 9Q4 7 7 9L6 14Q3 12 0 14Z" fill="#3c83d9" />
    <path d="M8 9Q11 11 14 9L13 14Q10 16 7 14Z" fill="#f4be2b" />
  </svg>
);

const ChevronsIcon = () => (
  <svg width="7" height="12" viewBox="0 0 7 12">
    <path d="M1 4L3.500 1.500L6 4M1 8.500L3.500 6L6 8.500" fill="none" stroke="#000" strokeWidth="1.300" />
  </svg>
);

const SpeakerIcon = () => (
  <svg width="17" height="16" viewBox="0 0 17 16">
    <path d="M1 5.500H4L8 2V14L4 10.500H1Z" fill="#fff" stroke="#666" />
    <path d="M10.500 5.500Q12 8 10.500 10.500M12.500 4Q15 8 12.500 12M14.500 2.500Q18 8 14.500 13.500" fill="none" stroke="#777" />
  </svg>
);

const NetworkIcon = () => (
  <svg width="17" height="17" viewBox="0 0 17 17">
    <rect x="5.500" y="3.500" width="10" height="9" fill="#eee" stroke="#555" />
    <path d="M1.500 1V5H6.500V1M4 5V13H7" fill="#fff" stroke="#444" />
    <path d="M11 6L16.500 16H5.500Z" fill="#f8cf2c" stroke="#b78b10" />
    <path d="M11 9V13M11 14V15" stroke="#222" strokeWidth="1.300" />
  </svg>
);

const TrayFlagIcon = () => (
  <svg width="17" height="16" viewBox="0 0 17 16">
    <path d="M2.500 1V15.500" stroke="#555" strokeWidth="1.500" />
    <path d="M3.500 2.500H9V4.500H15L13.500 7L15 9.500H8.500V8H3.500Z" fill="#fff" stroke="#666" />
  </svg>
);

const ScreenIcon = () => (
  <svg width="16" height="14" viewBox="0 0 16 14">
    <path d="M1 2L15 1V10L1 11Z" fill="#2d66b8" stroke="#1d447f" />
    <path d="M2 3L14 2L3 8Z" fill="#5b95dc" />
    <path d="M1 12.500H15" stroke="#dfe6ee" strokeWidth="1.500" />
  </svg>
);

const desktopIcons = [
  { label: "Recycle Bin", icon: <RecycleIcon /> },
  { label: "Firefox", icon: <FirefoxIcon />, link: true },
  { label: "Google\nChrome", icon: <ChromeIcon />, link: true },
  { label: "Opera", icon: <OperaIcon />, link: true },
  { label: "Skype", icon: <SkypeIcon />, link: true },
  { label: "CCleaner", icon: <CCleanerIcon />, link: true },
  { label: "VLC media\nplayer", icon: <VlcIcon />, link: true },
  { label: "Acrobat", icon: <AcrobatIcon />, link: true },
  {}, {}, {}, {}, {},
  { label: "or", left: true },
  { label: "storagerobe", icon: <StorageIcon /> },
] as { label?: string; icon?: React.ReactNode; link?: boolean; left?: boolean }[];

const App: React.FC = () => {
  return (
    <Desktop>
      <GlobalStyle />
      <Rays width="1280" height="692">
        <defs>
          <linearGradient id="ray" x1="0" y1="1" x2="1" y2="0">
            <stop offset="0" stopColor="#fff" stopOpacity=".1" />
            <stop offset="1" stopColor="#fff" stopOpacity=".75" />
          </linearGradient>
          <linearGradient id="beam" x1="0" y1="0" x2=".6" y2=".8">
            <stop offset=".2" stopColor="#3a9cf0" stopOpacity="0" />
            <stop offset=".5" stopColor="#3a9cf0" stopOpacity=".07" />
            <stop offset="1" stopColor="#3a9cf0" stopOpacity="0" />
          </linearGradient>
        </defs>
        <path d="M44 692L90 670V675L56 692Z" fill="url(#ray)" />
        <path d="M1048 120L1190 0H1280V100L1048 330Z" fill="url(#beam)" />
        <path d="M1190 50L1246 0" stroke="#6fb2ea" opacity=".18" />
      </Rays>
      <IconGrid>
        {desktopIcons.map((d, i) => (
          <DesktopItem key={i} $left={d.left}>
            <IconBox>
              {d.icon}
              {d.link && <ShortcutArrow />}
            </IconBox>
            <Caption>{d.label}</Caption>
          </DesktopItem>
        ))}
      </IconGrid>

      <BackWindow>
        <WinRarIcon />
        <BackMenu>File</BackMenu>
        <BackToolbar>
          <Grip $h={56} />
          <Grip $h={23} />
        </BackToolbar>
        <BackList>
          <BackColumn>Name</BackColumn>
          <BackRows>
            <FolderIcon />
            <MessageFileIcon />
          </BackRows>
        </BackList>
        <BackStatus>
          <svg width="20" height="7" viewBox="0 0 20 7">
            <rect x=".5" y=".5" width="19" height="6" fill="#3d4446" stroke="#8a8f8f" />
            <path d="M3 3.500H9" stroke="#9fb0a5" />
          </svg>
        </BackStatus>
      </BackWindow>

      <MailWindow>
        <TitleBar>
          <QuickAccess>
            <MailIcon />
            <Divider />
            <SaveIcon />
            <UndoIcon />
            <UndoIcon flip />
            <UpIcon />
            <UpIcon flip />
            <Divider />
            <CustomizeIcon />
          </QuickAccess>
          <Title>提前离职 - Message (HTML)</Title>
          <WindowButtons>
            <svg width="11" height="11" viewBox="0 0 11 11">
              <rect x=".5" y="5.500" width="10" height="3" fill="#fff" stroke="#555d68" />
            </svg>
            <svg width="11" height="11" viewBox="0 0 11 11">
              <rect x=".5" y="1.500" width="10" height="8" fill="#fff" stroke="#555d68" />
              <rect x="3.500" y="4.500" width="4" height="2" fill="none" stroke="#555d68" />
            </svg>
            <svg width="11" height="11" viewBox="0 0 11 11">
              <path d="M.5 1H3.500L5.500 3.500L7.500 1H10.500L7.500 5.500L10.500 10H7.500L5.500 7.500L3.500 10H.5L3.500 5.500Z" fill="#fff" stroke="#555d68" />
            </svg>
          </WindowButtons>
        </TitleBar>
        <TabBar>
          <Tab $kind="file">File</Tab>
          <Tab $kind="active">Message</Tab>
          <Tab>Developer</Tab>
          <TabTools>
            <svg width="11" height="9" viewBox="0 0 11 9">
              <path d="M1.500 7.500V5.500L5.500 1.500L9.500 5.500V7.500H7.500L5.500 5.500L3.500 7.500Z" fill="#fff" stroke="#444" />
            </svg>
            <HelpIcon />
          </TabTools>
        </TabBar>
        <Frame>
          <Ribbon>
            <Group $w={109}>
              <GroupBody $pad={7}>
                <SmallColumn $w={56} $row={22} $top={19}>
                  <SmallButton $off>
                    <JunkIcon />
                    Junk
                    <Arrow $off />
                  </SmallButton>
                </SmallColumn>
                <BigButton $w={40}>
                  <DeleteIcon />
                  <BigLabel>Delete</BigLabel>
                </BigButton>
              </GroupBody>
              <GroupLabel>Delete</GroupLabel>
            </Group>
            <Group $w={210}>
              <GroupBody $pad={3}>
                <BigButton $w={44}>
                  <ReplyIcon />
                  <BigLabel>Reply</BigLabel>
                </BigButton>
                <BigButton $w={40}>
                  <ReplyIcon all />
                  <BigLabel>{"Reply\nAll"}</BigLabel>
                </BigButton>
                <BigButton $w={51}>
                  <ForwardIcon />
                  <BigLabel>Forward</BigLabel>
                </BigButton>
                <SmallColumn $row={29} $top={1} $left={2}>
                  <SmallButton>
                    <MeetingIcon />
                    Meeting
                  </SmallButton>
                  <SmallButton $off>
                    <MeetingIcon off />
                    More
                    <Arrow $off />
                  </SmallButton>
                </SmallColumn>
              </GroupBody>
              <GroupLabel>Respond</GroupLabel>
            </Group>
            <Group $w={150}>
              <GroupBody $pad={6}>
                <Gallery>
                  <GalleryItem>
                    <CreateIcon />
                    Create New
                  </GalleryItem>
                  <GalleryScroll>
                    <ScrollCell>
                      <svg width="6" height="4">
                        <path d="M0 4L3 0L6 4Z" fill="#b9bec4" />
                      </svg>
                    </ScrollCell>
                    <ScrollCell>
                      <Arrow $off />
                    </ScrollCell>
                    <ScrollCell $on>
                      <svg width="8" height="8">
                        <path d="M0 1.500H8" stroke="#555" />
                        <path d="M1 4H7L4 7Z" fill="#555" />
                      </svg>
                    </ScrollCell>
                  </GalleryScroll>
                </Gallery>
              </GroupBody>
              <GroupLabel $launcher>
                Quick Steps
                <LauncherIcon />
              </GroupLabel>
            </Group>
            <Group $w={124}>
              <GroupBody $pad={5}>
                <BigButton $w={40}>
                  <MoveIcon />
                  <BigLabel>Move</BigLabel>
                  <Arrow $gap={4} />
                </BigButton>
                <SmallColumn $row={29} $top={1} $left={5}>
                  <SmallButton>
                    <OneNoteIcon />
                    OneNote
                  </SmallButton>
                  <SmallButton>
                    <ActionsIcon />
                    Actions
                    <Arrow />
                  </SmallButton>
                </SmallColumn>
              </GroupBody>
              <GroupLabel>Move</GroupLabel>
            </Group>
            <Group $w={154}>
              <GroupBody $pad={4}>
                <BigButton $w={44}>
                  <UnreadIcon />
                  <BigLabel>{"Mark\nUnread"}</BigLabel>
                </BigButton>
                <BigButton $w={58}>
                  <CategorizeIcon />
                  <BigLabel>Categorize</BigLabel>
                  <Arrow $gap={4} />
                </BigButton>
                <BigButton $w={46}>
                  <FlagIcon />
                  <BigLabel>
                    {"Follow\nUp "}
                    <Arrow />
                  </BigLabel>
                </BigButton>
              </GroupBody>
              <GroupLabel $launcher>
                Tags
                <LauncherIcon />
              </GroupLabel>
            </Group>
            <Group $w={134}>
              <GroupBody $pad={4}>
                <BigButton $w={51} $off>
                  <TranslateIcon />
                  <BigLabel>Translate</BigLabel>
                  <Arrow $off $gap={4} />
                </BigButton>
                <SmallColumn $row={22} $top={-3} $left={4}>
                  <SmallButton $off>
                    <FindIcon />
                    Find
                  </SmallButton>
                  <SmallButton>
                    <RelatedIcon />
                    Related
                    <Arrow />
                  </SmallButton>
                  <SmallButton>
                    <SelectIcon />
                    Select
                    <Arrow />
                  </SmallButton>
                </SmallColumn>
              </GroupBody>
              <GroupLabel>Editing</GroupLabel>
            </Group>
            <Group $w={51}>
              <GroupBody $pad={0}>
                <BigButton $w={50} $off>
                  <ZoomIcon />
                  <BigLabel>Zoom</BigLabel>
                </BigButton>
              </GroupBody>
              <GroupLabel>Zoom</GroupLabel>
            </Group>
          </Ribbon>
          <Fields>
            <Cell>From:</Cell>
            <Cell $ls={-0.34}>
              <Selected>Ma, Mary Liwen &lt;maryliwma@deloitte.com.cn&gt;</Selected>
            </Cell>
            <Cell $ls={-0.05}>
              <SentLabel>Sent:</SentLabel>
              Mon 2/14/2022 6:18 AM
            </Cell>
            <Cell>To:</Cell>
            <Cell $ls={-0.34}>NO X IT Alle</Cell>
            <Cell />
            <Cell>Cc:</Cell>
            <Cell />
            <Cell />
            <Cell>Subject:</Cell>
            <Cell $size={12} $ls={0.15}>
              提前离职
            </Cell>
          </Fields>
          <MessageBody>
            <Message>您好，我想在 2.21 号那天办理离职，工作已基本交接完成。</Message>
            <Scrollbar>
              <ScrollTop>
                <svg width="14" height="21" viewBox="0 0 14 21">
                  <path d="M3 3H11" stroke="#555" strokeWidth="1.500" />
                  <path d="M2.500 8.500H7.500V10H12.500V19H7.500V17H2.500Z" fill="#f4f4f4" stroke="#555" />
                  <path d="M4 10L11 17M11 12L5 15" stroke="#777" />
                </svg>
                <ScrollButton>
                  <svg width="8" height="5">
                    <path d="M0 5L4 0L8 5Z" fill="#939dae" />
                  </svg>
                </ScrollButton>
              </ScrollTop>
              <ScrollButton>
                <svg width="8" height="5">
                  <path d="M0 0H8L4 5Z" fill="#7b8699" />
                </svg>
              </ScrollButton>
            </Scrollbar>
          </MessageBody>
          <Splitter />
          <People>
            <Avatar />
            <PersonName>Ma, Mary Liwen</PersonName>
            <Avatar />
            <Avatar />
            <svg width="22" height="8" viewBox="0 0 22 8">
              <path d="M14 6L17.500 2.500L21 6" fill="none" stroke="#222" strokeWidth="1.800" />
            </svg>
          </People>
        </Frame>
      </MailWindow>

      <Watermark width="210" height="72" viewBox="0 0 210 72" fill="#a9cdf2" opacity=".62">
        <text x="5" y="54" textLength="62" lengthAdjust="spacingAndGlyphs" fontFamily="Roboto, sans-serif" fontSize="53">
          ANY
        </text>
        <text x="134" y="54" textLength="64" lengthAdjust="spacingAndGlyphs" fontFamily="Roboto, sans-serif" fontSize="53">
          RUN
        </text>
        <path
          d="M84 12Q78 9 78 17V52Q78 60 85 56L122 36M88 48V7L129 31M95 20L128 39M88 59V65L129 41"
          fill="none"
          stroke="#a9cdf2"
          strokeWidth="3.600"
          strokeLinejoin="round"
          strokeLinecap="round"
        />
      </Watermark>

      <Taskbar>
        <StartButton>
          <StartLogo />
          Start
        </StartButton>
        <Launch>
          <IeIcon />
        </Launch>
        <Launch>
          <ExplorerIcon />
        </Launch>
        <Launch>
          <PlayerIcon />
        </Launch>
        <Launch>
          <ChromeIcon size={16} />
        </Launch>
        <Launch>
          <OperaIcon size={16} />
        </Launch>
        <TaskButtons>
          <TaskButton>
            <WinRarIcon />
          </TaskButton>
          <TaskButton $active>
            <OutlookIcon />
          </TaskButton>
        </TaskButtons>
        <Tray>
          <ChevronsIcon />
          <SpeakerIcon />
          <NetworkIcon />
          <TrayFlagIcon />
          <Clock>8:44 AM</Clock>
          <ScreenIcon />
        </Tray>
      </Taskbar>
    </Desktop>
  );
};

export default App;
